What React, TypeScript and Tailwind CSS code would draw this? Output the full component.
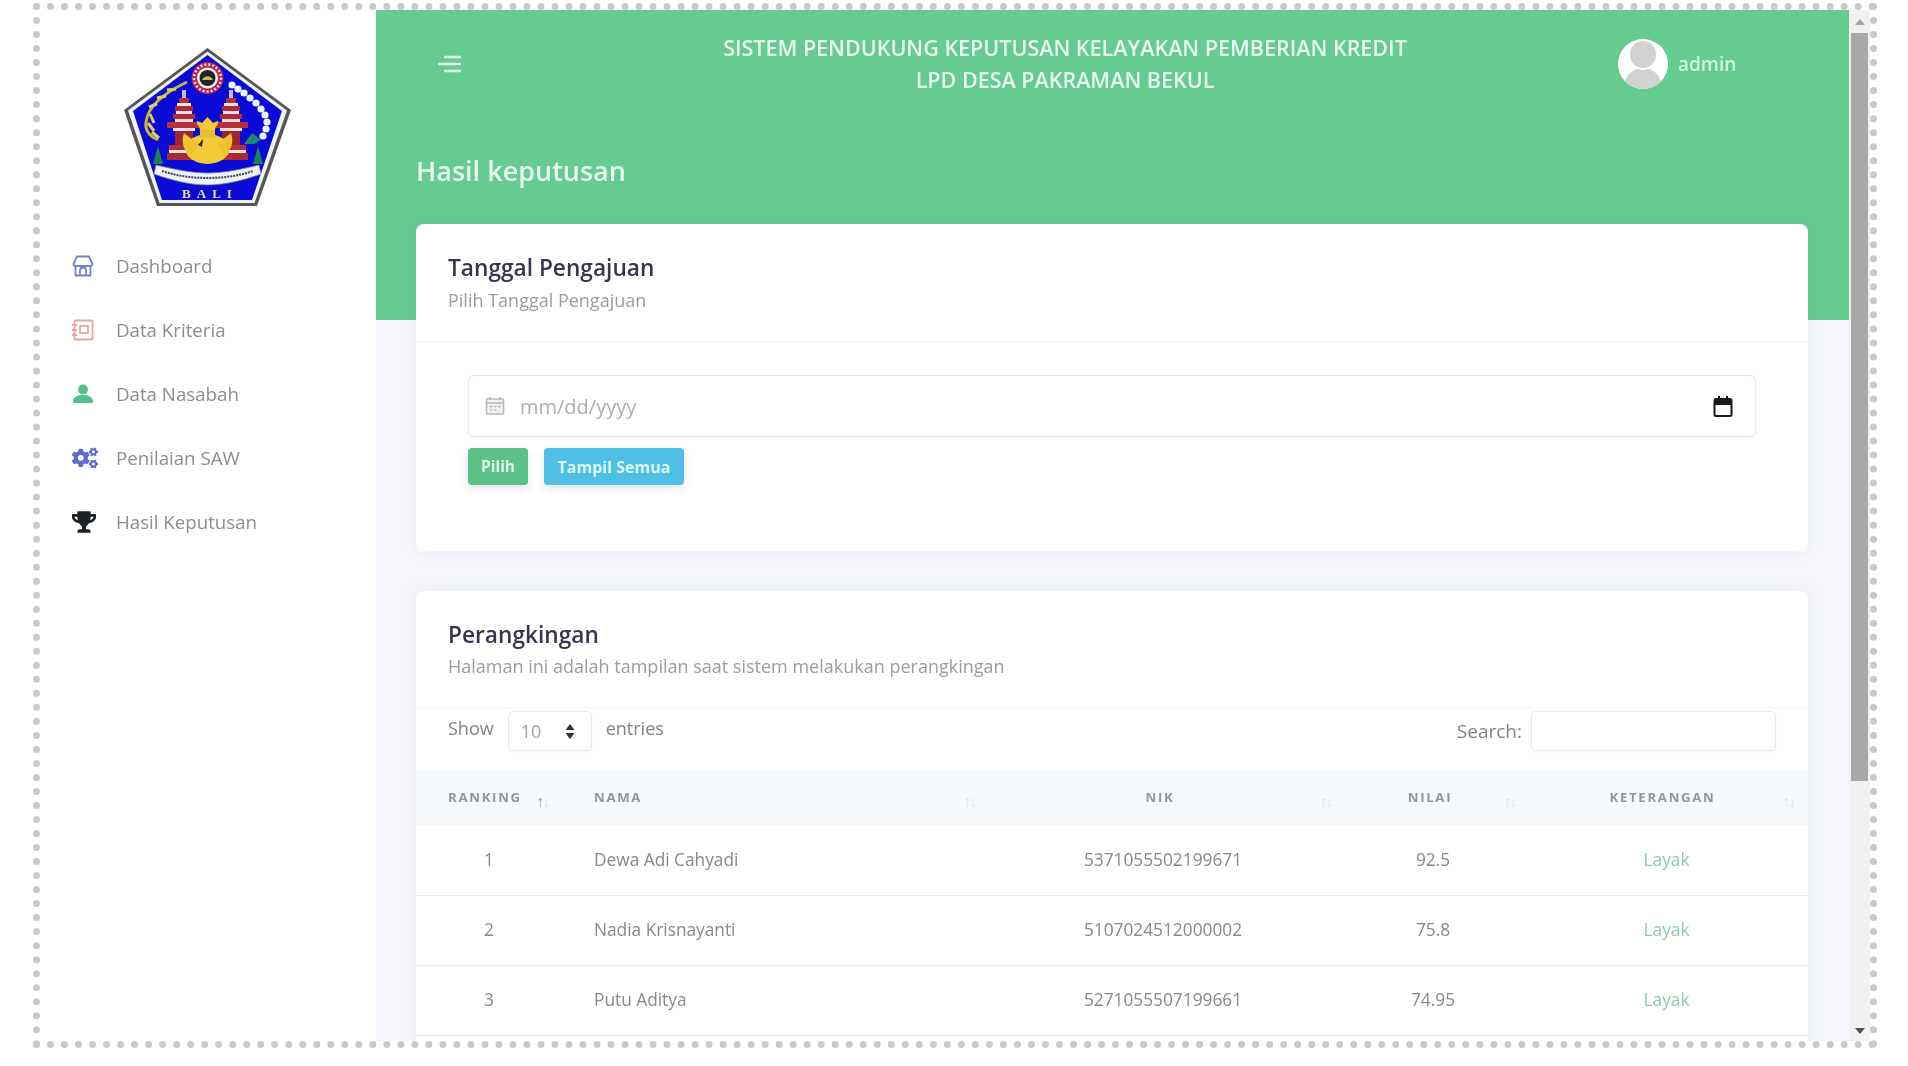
import React from 'react'
import { FaCogs, FaTrophy } from 'react-icons/fa'

const menu = [
  { label: 'Dashboard', icon: <StoreIcon /> },
  { label: 'Data Kriteria', icon: <NotebookIcon /> },
  { label: 'Data Nasabah', icon: <UserIcon /> },
  { label: 'Penilaian SAW', icon: <FaCogs className="ml-px text-[26px] text-[#5e6bd0]" /> },
  { label: 'Hasil Keputusan', icon: <FaTrophy className="ml-px text-[24px] text-[#1d2026]" /> },
]

const rows = [
  { rank: 1, nama: 'Dewa Adi Cahyadi', nik: '5371055502199671', nilai: '92.5' },
  { rank: 2, nama: 'Nadia Krisnayanti', nik: '5107024512000002', nilai: '75.8' },
  { rank: 3, nama: 'Putu Aditya', nik: '5271055507199661', nilai: '74.95' },
]

function StoreIcon() {
  return (
    <svg width="24" height="24" viewBox="0 0 24 24" fill="none" stroke="#7682c6" strokeWidth="1.8" strokeLinejoin="round">
      <path d="M6 2.500h12l3.500 7.500c0 1.500-1.300 2-2.500 2H5c-1.200 0-2.500-.5-2.500-2z" />
      <path d="M4.500 12v9.500h15V12" />
      <path d="M9 21.500v-5a3 3 0 0 1 6 0v5" />
    </svg>
  )
}

function NotebookIcon() {
  return (
    <svg width="24" height="24" viewBox="0 0 24 24" fill="none" stroke="#e6a799" strokeWidth="1.8">
      <rect x="3.500" y="2.500" width="18" height="19" rx="1" />
      <rect x="9" y="8" width="8" height="7" />
      <path d="M1 7h5M1 12h5M1 17h5" />
    </svg>
  )
}

function UserIcon() {
  return (
    <svg width="20" height="24" viewBox="0 0 22 24" fill="#56c08a" className="ml-[2px]">
      <circle cx="11" cy="7" r="5.500" />
      <path d="M2 22c-1.500 0-2-1-2-2 0-4 4-7 11-7s11 3 11 7c0 1-.5 2-2 2z" />
    </svg>
  )
}

function BaliLogo() {
  return (
    <svg width="167" height="158" viewBox="0 0 167 158" className="blur-[0.6px]">
      <polygon points="83.500,0 167,62 133,158 33,158 0,62" fill="#55565c" />
      <polygon points="83.500,3.500 163,62.500 130.500,155 35.500,155 4,62.500" fill="#f2f2f2" />
      <polygon points="83.500,7 158,63 128,152 38,152 9,63" fill="#0b0bd8" />
      {/* kiri: padi */}
      <path d="M63 34C42 44 24 58 22 74c-1 8 3 14 12 18" fill="none" stroke="#c9b53c" strokeWidth="3" />
      <path d="M52 41l-9 1M42 48l-9 2M33 56l-8 3M26 66l4 9M24 75l6 8M28 84l7 6" stroke="#e2cf55" strokeWidth="3" />
      {/* kanan: kapas */}
      {[
        [108, 37], [114, 41], [120, 45], [126, 50], [132, 55], [137, 61], [141, 67], [143, 74], [142, 81], [139, 88],
      ].map(([x, y]) => (
        <circle key={`${x}-${y}`} cx={x} cy={y} r="3.600" fill="#eef4fb" />
      ))}
      {/* meru */}
      {[60, 107].map((x) => (
        <g key={x}>
          <rect x={x - 2} y="42" width="4" height="8" fill="#c7b7d8" />
          <rect x={x - 5} y="50" width="10" height="5" fill="#b33038" />
          <rect x={x - 7} y="55" width="14" height="3" fill="#ece0e4" />
          <rect x={x - 9} y="58" width="18" height="5" fill="#a82a33" />
          <rect x={x - 8} y="63" width="16" height="3" fill="#ece0e4" />
          <rect x={x - 11} y="66" width="22" height="5" fill="#b02c35" />
          <rect x={x - 9} y="71" width="18" height="3" fill="#ece0e4" />
          <rect x={x - 17} y="74" width="34" height="6" fill="#b5323a" />
          <rect x={x - 11} y="80" width="22" height="3" fill="#ece0e4" />
          <rect x={x - 9} y="83" width="18" height="14" fill="#9c2630" />
          <rect x={x - 15} y="97" width="30" height="5" fill="#b5323a" />
          <rect x={x - 15} y="102" width="30" height="3" fill="#f0e4e6" />
          <rect x={x - 17} y="105" width="34" height="7" fill="#a82a33" />
        </g>
      ))}
      {/* lambang tengah */}
      <circle cx="83.500" cy="30" r="16" fill="#b7274a" />
      <circle cx="83.500" cy="30" r="13.500" fill="none" stroke="#f3dfe4" strokeWidth="2.500" strokeDasharray="2 2" />
      <circle cx="83.500" cy="30" r="10.500" fill="#f4f2f2" />
      <circle cx="83.500" cy="30" r="8" fill="#23241f" />
      <path d="M78 32c2-5 9-5 11 0z" fill="#c8b65c" />
      <ellipse cx="83.500" cy="101" rx="22" ry="15" fill="#f3cb36" />
      <path d="M60 85c-3 8-1 18 7 22l7-11zM107 85c3 8 1 18-7 22l-7-11z" fill="#efc22f" />
      <path d="M76 82c0-4-4-5-3-9l5 2 5.500-6 5.500 6 5-2c1 4-3 5-3 9z" fill="#f3cb36" />
      <rect x="76" y="82" width="15" height="8" fill="#e9bd2c" />
      <path d="M74 97l5-6-1 8z" fill="#2a2a18" />
      {/* pohon */}
      <path d="M35 116l-6 0 5-18 5 18zM133 116l6 0-5-18-5 18z" fill="#1e7f55" />
      <path d="M120 96l8-11 9 7-7 4z" fill="#1e8a68" />
      {/* pita */}
      <path d="M32 117c18 4 34 8 51.500 8S118 121 135 117l2 9c-17 6-35 11-53.500 11S47 132 30 126z" fill="#eef1f6" stroke="#7b7d91" strokeWidth="0.800" />
      <path d="M38 123c15 5 30 7 45.500 7s31-2 45.500-7" fill="none" stroke="#3d4066" strokeWidth="2" strokeDasharray="2 1" />
      <text x="86" y="150" textAnchor="middle" fontFamily="'Liberation Serif', serif" fontWeight="700" fontSize="13" letterSpacing="6" fill="#eadf96">BALI</text>
    </svg>
  )
}

function SortArrows({ active }: { active?: boolean }) {
  return (
    <span className="absolute right-[14px] top-[22px] flex font-['Liberation_Sans',sans-serif] text-[16px] leading-[18px] tracking-[-2px] font-normal text-[#dfe3e8]">
      <span className={active ? 'text-[#9aa1ab]' : ''}>↑</span>
      <span>↓</span>
    </span>
  )
}

export default function App() {
  return (
    <div className="w-[1908px] h-[1066px] overflow-hidden bg-white pt-[3px] pl-[33px] font-['Open_Sans',sans-serif]">
      <div className="flex w-[1844px] h-[1045px] border-[7px] border-dotted border-[#c9c9c9]">
        <aside className="w-[336px] shrink-0 bg-white blur-[0.6px]">
          <div className="flex justify-center pt-[38px] pr-[2px]">
            <BaliLogo />
          </div>
          <nav className="mt-[40px] flex flex-col gap-[24px] pl-[31px]">
            {menu.map((item) => (
              <div key={item.label} className="flex h-[40px] items-center">
                <span className="flex w-[45px] justify-start">{item.icon}</span>
                <span className="text-[18.700px] text-[#8b8d91]">{item.label}</span>
              </div>
            ))}
          </nav>
        </aside>

        <main className="relative w-[1473px] shrink-0 overflow-hidden bg-[#f4f6fb] blur-[0.6px]">
          <header className="h-[310px] bg-[#66cb8f] px-[40px]">
            <div className="flex h-[108px] items-center">
              <svg width="26" height="20" viewBox="0 0 26 20" className="ml-[21px]" fill="none" stroke="#e6fbef" strokeWidth="2.600">
                <path d="M7 3h17M1 10h23M7 17h17" />
              </svg>
              <div className="ml-[202px] w-[800px] text-center text-[21.500px] font-semibold leading-[32px] text-[#e8fbef]">
                <div>SISTEM PENDUKUNG KEPUTUSAN KELAYAKAN PEMBERIAN KREDIT</div>
                <div>LPD DESA PAKRAMAN BEKUL</div>
              </div>
              <div className="relative ml-[153px] h-[50px] w-[50px] overflow-hidden rounded-full bg-white">
                <div className="absolute left-[6px] top-[29px] h-[30px] w-[38px] rounded-t-[20px] bg-[#d2d2d2]" />
                <div className="absolute left-[12px] top-[2px] h-[27px] w-[26px] rounded-full bg-[#d2d2d2] ring-2 ring-white" />
              </div>
              <span className="ml-[10px] text-[19px] font-semibold text-[#cff5dd]">admin</span>
            </div>
            <h1 className="mt-[34px] text-[27px] font-semibold leading-[38px] text-[#e6fbef]">Hasil keputusan</h1>
          </header>

          <div className="-mt-[96px] flex flex-col gap-[40px] pl-[40px] pr-[41px]">
            <section className="h-[327px] rounded-[8px] bg-white shadow-[0_0_16px_rgba(136,152,170,0.12)]">
              <div className="h-[118px] border-b border-[#f3f4f6] px-[32px] pt-[28px]">
                <h2 className="text-[22.700px] font-semibold leading-[32px] text-[#36364f]">Tanggal Pengajuan</h2>
                <p className="text-[18px] leading-[32px] text-[#9a9ca0]">Pilih Tanggal Pengajuan</p>
              </div>
              <div className="px-[52px] pt-[33px]">
                <div className="flex h-[62px] items-center rounded-[6px] border border-[#e6e8ed] pl-[16px] pr-[22px] shadow-[0_1px_3px_rgba(50,50,93,0.06)]">
                  <svg width="20" height="20" viewBox="0 0 20 20" className="mr-[15px]" fill="none" stroke="#b6b8bd" strokeWidth="1.600">
                    <rect x="1.500" y="3" width="17" height="15" rx="1" fill="#f1f1f3" />
                    <path d="M1.500 7h17M5 1v3M15 1v3" />
                    <path d="M5 10.500h2.500M9 10.500h2.500M13 10.500h2.500M5 14h2.500M9 14h2.500" strokeWidth="1.400" />
                  </svg>
                  <span className="mt-[2px] flex-1 text-[20px] text-[#acaeb3]">mm/dd/yyyy</span>
                  <svg width="20" height="22" viewBox="0 0 20 22" fill="none" stroke="#1a1a1a" strokeWidth="2">
                    <rect x="1.500" y="4" width="17" height="17" rx="1.500" />
                    <path d="M1.500 7.500h17" strokeWidth="5" />
                    <path d="M6 1v3M14 1v3" />
                  </svg>
                </div>
                <div className="mt-[11px] flex gap-[16px]">
                  <button className="h-[37px] w-[60px] rounded-[4px] bg-[#5cc187] text-[15.500px] font-bold text-[#dffbe9] shadow-[0_4px_8px_rgba(50,50,93,0.12)]">Pilih</button>
                  <button className="h-[37px] w-[140px] rounded-[4px] bg-[#4fbfe6] text-[16px] font-bold text-[#dcf8fb] shadow-[0_4px_8px_rgba(50,50,93,0.12)]">Tampil Semua</button>
                </div>
              </div>
            </section>

            <section className="h-[600px] rounded-[8px] bg-white shadow-[0_0_16px_rgba(136,152,170,0.12)]">
              <div className="h-[117px] border-b border-[#f5f6f8] px-[32px] pt-[28px]">
                <h2 className="text-[22.700px] font-semibold leading-[32px] text-[#36364f]">Perangkingan</h2>
                <p className="-mt-px text-[18px] leading-[32px] text-[#9a9ca0]">Halaman ini adalah tampilan saat sistem melakukan perangkingan</p>
              </div>
              <div className="flex h-[63px] items-start justify-between px-[32px] pt-[3px] text-[18px] text-[#7f8388]">
                <div className="flex items-center">
                  <span className="-mt-[6px]">Show</span>
                  <div className="ml-[14px] flex h-[40px] w-[84px] items-center justify-between rounded-[5px] border border-[#e6e8ed] pl-[12px] pr-[16px] shadow-[0_1px_3px_rgba(50,50,93,0.05)]">
                    <span className="text-[#a0a3a8]">10</span>
                    <svg width="10" height="15" viewBox="0 0 10 15" fill="#2b2f3a">
                      <path d="M5 0l4.500 6h-9zM5 15l-4.500-6h9z" />
                    </svg>
                  </div>
                  <span className="-mt-[6px] ml-[14px]">entries</span>
                </div>
                <div className="flex items-center">
                  <span className="mr-[9px] text-[19px]">Search:</span>
                  <div className="h-[40px] w-[245px] rounded-[5px] border border-[#e6e8ed] shadow-[0_1px_3px_rgba(50,50,93,0.05)]" />
                </div>
              </div>
              <table className="w-full table-fixed border-collapse">
                <colgroup>
                  <col className="w-[146px]" />
                  <col className="w-[427px]" />
                  <col className="w-[356px]" />
                  <col className="w-[184px]" />
                  <col className="w-[279px]" />
                </colgroup>
                <thead>
                  <tr className="h-[54px] bg-[#f6f9fc] text-[13.200px] tracking-[1.700px] text-[#8f96a0]">
                    <th className="relative pl-[32px] text-left font-bold">RANKING<SortArrows active /></th>
                    <th className="relative pl-[32px] text-left font-bold">NAMA<SortArrows /></th>
                    <th className="relative pr-[14px] text-center font-bold">NIK<SortArrows /></th>
                    <th className="relative pr-[14px] text-center font-bold">NILAI<SortArrows /></th>
                    <th className="relative pr-[12px] text-center font-bold">KETERANGAN<SortArrows /></th>
                  </tr>
                </thead>
                <tbody className="text-[17.300px] text-[#85888d]">
                  {rows.map((row) => (
                    <tr key={row.rank} className="h-[70px] border-b border-[#e9ecef]">
                      <td className="text-center">{row.rank}</td>
                      <td className="pl-[32px]">{row.nama}</td>
                      <td className="pr-[8px] text-center">{row.nik}</td>
                      <td className="pr-[8px] text-center">{row.nilai}</td>
                      <td className="pr-[4px] text-center text-[#8fcbaa]">Layak</td>
                    </tr>
                  ))}
                </tbody>
              </table>
            </section>
          </div>
        </main>

        <div className="flex w-[21px] shrink-0 flex-col bg-[#f1f1f1]">
          <div className="flex h-[23px] items-center justify-center">
            <div className="h-0 w-0 border-x-[5px] border-b-[6px] border-x-transparent border-b-[#a3a3a3]" />
          </div>
          <div className="ml-[2px] h-[748px] w-[17px] bg-[#a8a8a8]" />
          <div className="flex-1" />
          <div className="flex h-[20px] items-center justify-center">
            <div className="h-0 w-0 border-x-[5px] border-t-[6px] border-x-transparent border-t-[#505050]" />
          </div>
        </div>
      </div>
    </div>
  )
}
